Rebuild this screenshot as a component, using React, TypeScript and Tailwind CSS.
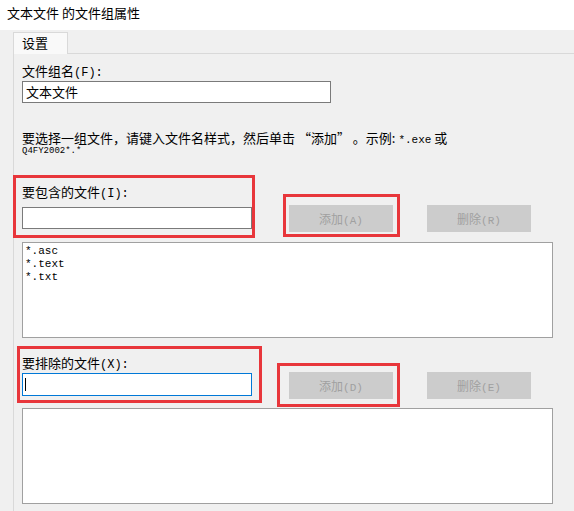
import React from 'react';

const RedBox: React.FC<{ className: string }> = ({ className }) => (
  <div className={`absolute border-[3px] border-[#e8363b] pointer-events-none ${className}`} />
);

const DisabledButton: React.FC<{ label: string; hot: string; className?: string }> = ({ label, hot, className = '' }) => (
  <button
    disabled
    className={`w-[104px] h-[27px] bg-[#cccccc] border border-[#cccccc] text-[12px] leading-[25px] text-[#a0a0a0] text-center shrink-0 ${className}`}
  >
    {label}
    <span className="font-['Liberation_Mono',monospace] text-[11px] leading-[13px]">({hot})</span>
  </button>
);

export default function App() {
  return (
    <div className="w-[574px] h-[511px] overflow-hidden bg-[#f0f0f0] text-[13px] text-black font-['Noto_Sans_CJK_SC',sans-serif]">
      {/* window title */}
      <div className="h-[30px] bg-white pl-[7px] pt-[5px] leading-[16px]">文本文件 的文件组属性</div>

      {/* tab strip */}
      <div className="h-[23px] pl-[13px] flex items-end">
        <div className="relative z-10 -mb-px w-[55px] h-[22px] bg-[#f9f9f9] border border-b-0 border-[#d9d9d9] pl-[8px] pt-[2px] leading-[16px]">
          设置
        </div>
      </div>

      {/* tab panel */}
      <div className="ml-[13px] h-[460px] border-l border-t border-[#d9d9d9] pl-[8px] pt-[9px]">
        <div className="h-[16px] leading-[16px]">
          文件组名<span className="font-['Liberation_Mono',monospace] text-[12px] leading-[13px]">(F):</span>
        </div>
        <div className="mt-[2px] w-[309px] h-[22px] bg-white border border-[#7a7a7a] pl-[3px] leading-[20px]">文本文件</div>

        <div className="mt-[27px] h-[16px] leading-[16px] whitespace-nowrap">
          要选择一组文件，请键入文件名样式，然后单击 “添加” 。示例:{' '}
          <span className="font-['Liberation_Mono',monospace] text-[11px] leading-[13px]">*.exe</span> 或
        </div>
        <div className="mt-[1px] h-[9px] leading-[9px] text-[9px] font-['Liberation_Mono',monospace]">Q4FY2002*.*</div>

        {/* include row */}
        <div className="relative mt-[28px] flex items-start">
          <div className="w-[230px]">
            <div className="h-[16px] leading-[16px]">
              要包含的文件<span className="font-['Liberation_Mono',monospace] text-[12px] leading-[13px]">(I):</span>
            </div>
            <div className="mt-[7px] h-[22px] bg-white border border-[#7a7a7a]" />
          </div>
          <DisabledButton label="添加" hot="A" className="ml-[37px] mt-[21px]" />
          <DisabledButton label="删除" hot="R" className="ml-[34px] mt-[21px]" />
          <RedBox className="-left-[9px] -top-[9px] w-[242px] h-[63px]" />
          <RedBox className="left-[261px] top-[10px] w-[117px] h-[43px]" />
        </div>

        <div className="mt-[10px] w-[531px] h-[96px] bg-white border border-[#a0a0a0] pl-[2px] pt-[2px] font-['Liberation_Mono',monospace] text-[11px] leading-[13px]">
          <div>*.asc</div>
          <div>*.text</div>
          <div>*.txt</div>
        </div>

        {/* exclude row */}
        <div className="relative mt-[17px] flex items-start">
          <div className="w-[230px]">
            <div className="h-[16px] leading-[16px]">
              要排除的文件<span className="font-['Liberation_Mono',monospace] text-[12px] leading-[13px]">(X):</span>
            </div>
            <div className="mt-[2px] h-[23px] bg-white border border-[#0078d7] pl-[2px] pt-[4px]">
              <div className="w-px h-[13px] bg-black" />
            </div>
          </div>
          <DisabledButton label="添加" hot="D" className="ml-[37px] mt-[17px]" />
          <DisabledButton label="删除" hot="E" className="ml-[34px] mt-[17px]" />
          <RedBox className="-left-[5px] -top-[9px] w-[245px] h-[57px]" />
          <RedBox className="left-[255px] top-[8px] w-[123px] h-[44px]" />
        </div>

        <div className="mt-[9px] w-[531px] h-[96px] bg-white border border-[#a0a0a0]" />
      </div>
    </div>
  );
}
